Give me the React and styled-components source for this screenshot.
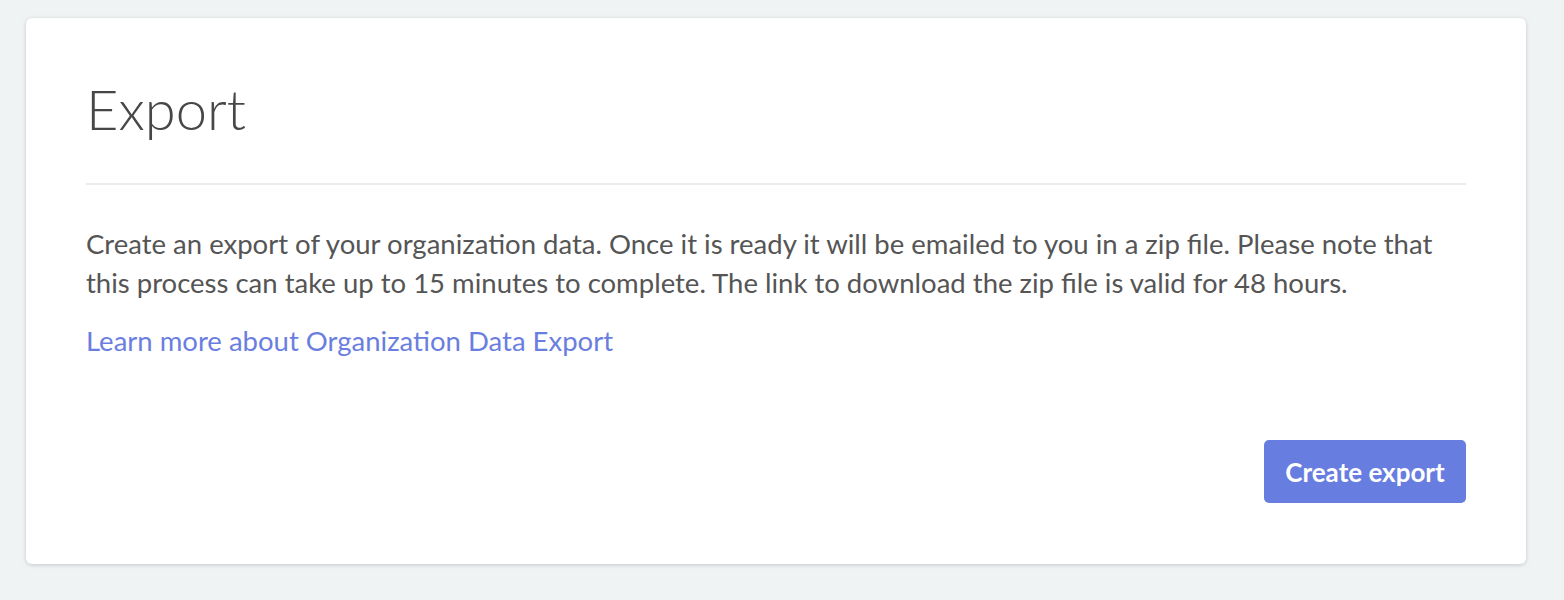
import React from "react";
import styled, { createGlobalStyle } from "styled-components";

const GlobalStyle = createGlobalStyle`
  html, body {
    margin: 0;
    padding: 0;
    background: #f0f3f4;
    font-family: Lato, "Open Sans", "Liberation Sans", sans-serif;
  }
`;

const Page = styled.div`
  padding: 18px 38px 36px 26px;
`;

const Card = styled.section`
  background: #fff;
  border-radius: 6px;
  box-shadow: 0 1px 4px rgba(0, 0, 0, 0.18);
  padding: 60px 60px 61px;
`;

const Title = styled.h1`
  margin: 0;
  font-size: 56px;
  line-height: 62px;
  font-weight: 300;
  color: #474747;
`;

const Divider = styled.hr`
  border: none;
  border-top: 2px solid #ececec;
  margin: 43px 0 39px;
`;

const Text = styled.p`
  margin: 0;
  font-size: 27.5px;
  line-height: 39px;
  color: #555;
`;

const LinkRow = styled.p`
  margin: 19px 0 0;
  font-size: 27.5px;
  line-height: 39px;
`;

const Link = styled.a`
  color: #6a7ee0;
  text-decoration: none;
`;

const Actions = styled.div`
  display: flex;
  justify-content: flex-end;
  margin-top: 80px;
`;

const Button = styled.button`
  width: 202px;
  height: 63px;
  padding: 0;
  border: none;
  border-radius: 5px;
  background: #687de0;
  color: #fff;
  font-family: Lato, "Liberation Sans", sans-serif;
  font-size: 26px;
  font-weight: 700;
  cursor: pointer;
`;

export default function App() {
  return (
    <>
      <GlobalStyle />
      <Page>
        <Card>
          <Title>Export</Title>
          <Divider />
          <Text>
            Create an export of your organization data. Once it is ready it will be emailed to you in a zip file. Please note that this process can take up to 15 minutes to complete. The link to download the zip file is valid for 48 hours.
          </Text>
          <LinkRow>
            <Link href="#">Learn more about Organization Data Export</Link>
          </LinkRow>
          <Actions>
            <Button>Create export</Button>
          </Actions>
        </Card>
      </Page>
    </>
  );
}
